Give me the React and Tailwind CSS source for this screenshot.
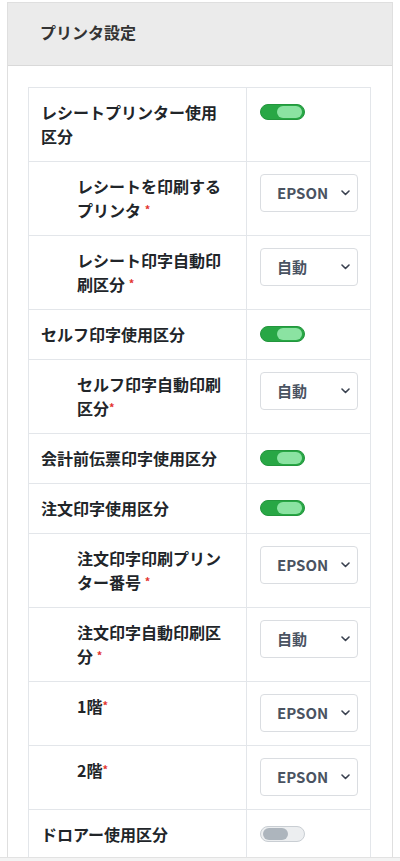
import React from 'react';

const FONT = { fontFamily: '"Noto Sans CJK JP", "Noto Sans", sans-serif' };

// 設定行の定義
const rows = [
  { label: 'レシートプリンター使用区分', type: 'toggle', on: true },
  { label: 'レシートを印刷する', tail: 'プリンタ', req: ' ', type: 'select', value: 'EPSON', indent: true },
  { label: 'レシート印字自動印刷区分', req: ' ', type: 'select', value: '自動', indent: true },
  { label: 'セルフ印字使用区分', type: 'toggle', on: true },
  { label: 'セルフ印字自動印刷区分', req: '', type: 'select', value: '自動', indent: true },
  { label: '会計前伝票印字使用区分', type: 'toggle', on: true },
  { label: '注文印字使用区分', type: 'toggle', on: true },
  { label: '注文印字印刷プリンター番号', req: ' ', type: 'select', value: 'EPSON', indent: true },
  { label: '注文印字自動印刷区分', req: ' ', type: 'select', value: '自動', indent: true },
  { label: '1階', req: '', type: 'select', value: 'EPSON', indent: true },
  { label: '2階', req: '', type: 'select', value: 'EPSON', indent: true },
  { label: 'ドロアー使用区分', type: 'toggle', on: false }
];

const Toggle = ({ on }) => (
  <div
    className={`mt-1 w-[45px] h-[16px] rounded-full border flex items-center px-[2px] ${
      on
        ? 'bg-[#28a745] border-[#23963d] justify-end'
        : 'bg-[#eceef0] border-[#c9ced3] justify-start'
    }`}
  >
    <div className={`h-[12px] w-[25px] rounded-full ${on ? 'bg-[#8be3a2]' : 'bg-[#adb5bd]'}`} />
  </div>
);

const FakeSelect = ({ value }) => (
  <div className="h-[38px] w-[98px] border border-[#dadde1] rounded-[4px] bg-white flex items-center justify-between pl-4 pr-[7px]">
    <span className="text-[15px] font-bold text-[#4a5361]">{value}</span>
    <svg width="9" height="6" viewBox="0 0 9 6" className="text-[#3a4250]">
      <path d="M1 1l3.5 3.5L8 1" fill="none" stroke="currentColor" strokeWidth="1.6" strokeLinecap="round" strokeLinejoin="round" />
    </svg>
  </div>
);

const App = () => {
  return (
    <div className="min-h-[861px] bg-white pt-[2px] px-[7px]" style={FONT}>
      <div className="border border-[#dfdfdf] bg-white">
        {/* Header */}
        <div className="h-[63px] bg-[#ebebeb] border-b border-[#d9d9d9] flex items-center px-8 pb-1">
          <h2 className="text-[16px] font-bold text-[#333]">プリンタ設定</h2>
        </div>

        {/* Body */}
        <div className="px-[20px] pt-[21px]">
          <table className="w-[343px] border-collapse text-[16px] leading-6 text-[#212529]">
            <tbody>
              {rows.map((row, i) => (
                <tr key={i}>
                  <td
                    className={`w-[218px] align-top border border-[#e3e6ea] pt-3 pb-[13px] pr-5 font-bold ${
                      row.indent ? 'pl-[48px]' : 'pl-3'
                    }`}
                  >
                    {row.label}
                    {row.tail && <br />}
                    {row.tail}
                    {row.req !== undefined && (
                      <>
                        {row.req}
                        <span className="text-[#e3342f] text-[11px] leading-none align-[3px]">*</span>
                      </>
                    )}
                  </td>
                  <td className="align-top border border-[#e3e6ea] pt-3 pb-[13px] pl-[13px] pr-3">
                    {row.type === 'toggle' ? <Toggle on={row.on} /> : <FakeSelect value={row.value} />}
                  </td>
                </tr>
              ))}
            </tbody>
          </table>
        </div>
      </div>

      {/* 下部バー */}
      <div className="fixed bottom-0 left-0 right-0 h-[4px] bg-[#f3f3f3] border-t border-[#e2e2e2]" />
    </div>
  );
};

export default App;
